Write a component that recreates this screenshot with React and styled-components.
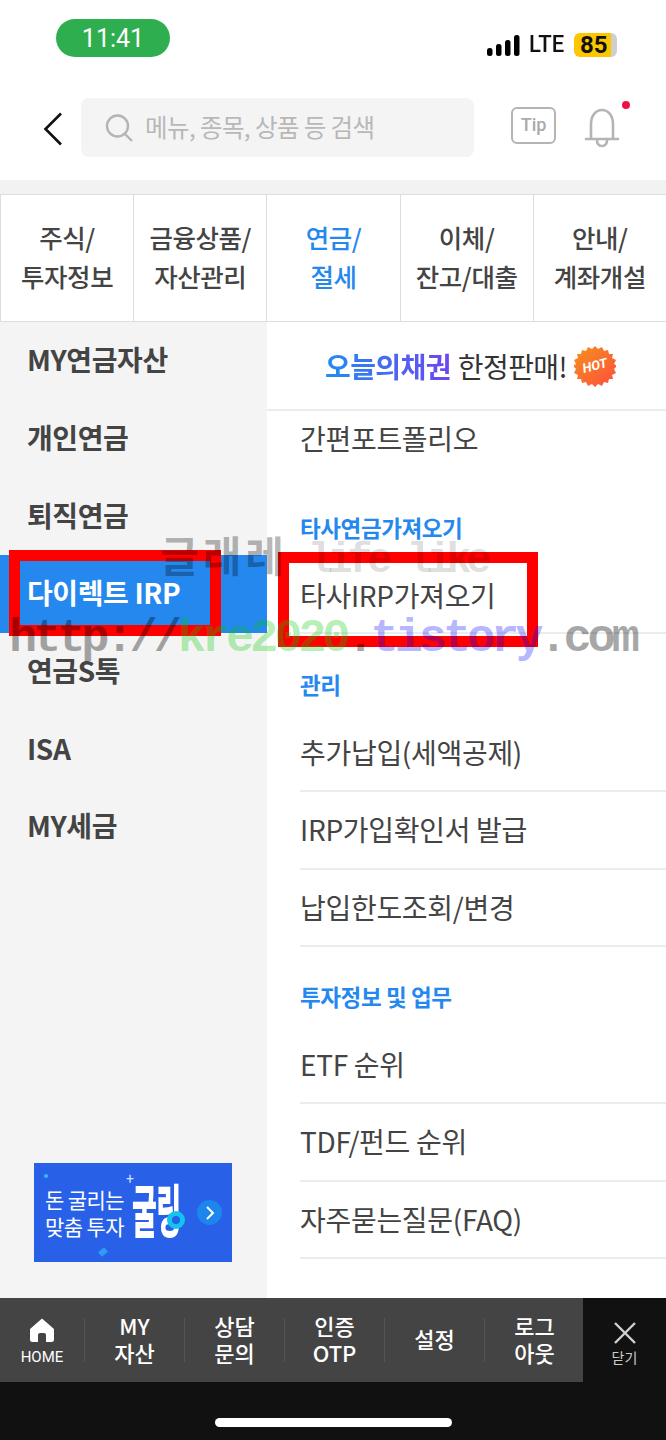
import React from 'react';
import styled, { createGlobalStyle } from 'styled-components';

const tabs = [
  ['주식/', '투자정보'],
  ['금융상품/', '자산관리'],
  ['연금/', '절세'],
  ['이체/', '잔고/대출'],
  ['안내/', '계좌개설'],
];

const sideMenu = ['MY연금자산', '개인연금', '퇴직연금', '다이렉트 IRP', '연금S톡', 'ISA', 'MY세금'];

const navItems = [['MY', '자산'], ['상담', '문의'], ['인증', 'OTP'], ['설정'], ['로그', '아웃']];

const App = () => (
  <Screen>
    <GlobalStyle />
    <StatusBar>
      <TimePill>11:41</TimePill>
      <StatusRight>
        <svg width="33" height="21" viewBox="0 0 33 21">
          <rect x="0" y="13" width="5.5" height="8" rx="2.5" fill="#000" />
          <rect x="9" y="9" width="5.5" height="12" rx="2.5" fill="#000" />
          <rect x="18" y="5" width="5.5" height="16" rx="2.5" fill="#000" />
          <rect x="27" y="0" width="5.5" height="21" rx="2.5" fill="#000" />
        </svg>
        <Lte>LTE</Lte>
        <Battery>85</Battery>
      </StatusRight>
    </StatusBar>

    <Header>
      <BackButton>
        <svg width="20" height="34" viewBox="0 0 20 34" fill="none">
          <path d="M18 1.5 2.5 17 18 32.5" stroke="#111" strokeWidth="2.6" />
        </svg>
      </BackButton>
      <SearchBox>
        <svg width="30" height="30" viewBox="0 0 30 30" fill="none" stroke="#b4b4b4" strokeWidth="2.4">
          <circle cx="13.5" cy="13" r="10.5" />
          <path d="m21 21 7 7" />
        </svg>
        <SearchText>메뉴, 종목, 상품 등 검색</SearchText>
      </SearchBox>
      <TipBadge>Tip</TipBadge>
      <BellWrap>
        <svg width="36" height="40" viewBox="0 0 36 40" fill="none" stroke="#b4b4b4" strokeWidth="2.6">
          <path d="M7 30V16C7 8 11.5 2 18 2s11 6 11 14v14" />
          <path d="M2 31h32" strokeLinecap="round" />
          <path d="M13 32c0 4 2 6 5 6s5-2 5-6" />
        </svg>
        <BellDot />
      </BellWrap>
    </Header>

    <GreyBand />

    <TabRow>
      {tabs.map((t, i) => (
        <Tab key={t[0]} $active={i === 2}>
          <span>{t[0]}</span>
          <span>{t[1]}</span>
        </Tab>
      ))}
    </TabRow>

    <Body>
      <Sidebar>
        <SideList>
          {sideMenu.map((m, i) => (
            <SideItem key={m} $active={i === 3}>{m}</SideItem>
          ))}
        </SideList>
        <Promo>
          <PromoDot />
          <PromoStar>+</PromoStar>
          <PromoText>
            <span>돈 굴리는</span>
            <span>맞춤 투자</span>
          </PromoText>
          <PromoLogo>굴링</PromoLogo>
          <PromoRing />
          <PromoArrow>
            <svg width="10" height="16" viewBox="0 0 10 16" fill="none">
              <path d="m2 2 6 6-6 6" stroke="#fff" strokeWidth="2" />
            </svg>
          </PromoArrow>
          <PromoChip />
        </Promo>
      </Sidebar>

      <Content>
        <AdRow>
          <AdBlue>오늘의채권</AdBlue>
          <AdDark>한정판매!</AdDark>
          <HotBadge>
            <svg width="42" height="42" viewBox="0 0 42 42">
              <defs>
                <linearGradient id="hot" x1="0" y1="0" x2="1" y2="1">
                  <stop offset="0" stopColor="#f5921e" />
                  <stop offset="1" stopColor="#ff4d3d" />
                </linearGradient>
              </defs>
              <path
                fill="url(#hot)"
                d="M21 1l3 3 4-2 2 4 4-1 1 4 4 0-1 4 4 2-2 4 3 2-3 3 2 4-4 2 1 4-4 0-1 4-4-1-2 4-4-2-3 3-3-3-4 2-2-4-4 1-1-4-4 0 1-4-4-2 2-4-3-3 3-2-2-4 4-2-1-4 4 0 1-4 4 1 2-4 4 2z"
              />
            </svg>
            <HotText>HOT</HotText>
          </HotBadge>
        </AdRow>
        <MenuItem $h={54}>간편포트폴리오</MenuItem>
        <SectionTitle $h={94} $pt={47}>타사연금가져오기</SectionTitle>
        <MenuItem $h={75} $line>타사IRP가져오기</MenuItem>
        <SectionTitle $h={80.5} $pt={35}>관리</SectionTitle>
        <MenuItem $h={77.500} $line>추가납입(세액공제)</MenuItem>
        <MenuItem $h={77.500} $line>IRP가입확인서 발급</MenuItem>
        <MenuItem $h={77.500} $line>납입한도조회/변경</MenuItem>
        <SectionTitle $h={79.5} $pt={33.5}>투자정보 및 업무</SectionTitle>
        <MenuItem $h={77.500} $line>ETF 순위</MenuItem>
        <MenuItem $h={77.500} $line>TDF/펀드 순위</MenuItem>
        <MenuItem $h={77.500} $line>자주묻는질문(FAQ)</MenuItem>
      </Content>
    </Body>

    <BottomNav>
      <NavMain>
        <HomeCell>
          <svg width="26" height="24" viewBox="0 0 26 24">
            <path
              fill="#fff"
              d="M13 0.5 25 11v10.5a2.5 2.5 0 0 1-2.5 2.5H17v-7a2 2 0 0 0-2-2h-4a2 2 0 0 0-2 2v7H3.500A2.500 2.500 0 0 1 1 21.500V11z"
            />
          </svg>
          <HomeLabel>HOME</HomeLabel>
        </HomeCell>
        {navItems.map(n => (
          <NavCell key={n[0]}>
            {n.map(l => (
              <span key={l}>{l}</span>
            ))}
          </NavCell>
        ))}
      </NavMain>
      <CloseCell>
        <svg width="24" height="24" viewBox="0 0 24 24" fill="none">
          <path d="M2 2l20 20M22 2 2 22" stroke="#d0d0d0" strokeWidth="2.4" />
        </svg>
        <CloseLabel>닫기</CloseLabel>
      </CloseCell>
    </BottomNav>

    <HomeBar>
      <HomeIndicator />
    </HomeBar>

    <RedBox $x={9} $y={550} $w={212} $h={86} />
    <RedBox $x={278} $y={552} $w={260} $h={95} />
    <MarkTop>
      <MarkHangul>글래레</MarkHangul> life like
    </MarkTop>
    <MarkUrl>
      <span>http://</span>
      <MarkGreen>kre2020</MarkGreen>
      <span>.</span>
      <MarkPurple>tistory</MarkPurple>
      <span>.com</span>
    </MarkUrl>
  </Screen>
);

export default App;

const GlobalStyle = createGlobalStyle`
  html, body {
    margin: 0;
    padding: 0;
    background: #fff;
  }
  * {
    box-sizing: border-box;
  }
`;

const Screen = styled.div`
  position: relative;
  width: 666px;
  height: 1440px;
  overflow: hidden;
  display: flex;
  flex-direction: column;
  background: #fff;
  font-family: 'Noto Sans CJK KR', 'Noto Sans', sans-serif;
`;

const StatusBar = styled.div`
  height: 85px;
  padding: 19px 49px 0 56px;
  display: flex;
  justify-content: space-between;
  align-items: flex-start;
`;

const TimePill = styled.div`
  width: 114px;
  height: 38px;
  padding-top: 1px;
  border-radius: 19px;
  background: #2fae50;
  color: #fff;
  font: 400 25px/38px 'Roboto', sans-serif;
  text-align: center;
`;

const StatusRight = styled.div`
  margin-top: 14px;
  display: flex;
  align-items: center;
  gap: 9px;
`;

const Lte = styled.span`
  width: 36px;
  color: #111;
  font: 500 23px/22px 'Roboto', sans-serif;
  transform: scaleX(0.96);
  transform-origin: left center;
`;

const Battery = styled.div`
  width: 43px;
  height: 24px;
  border-radius: 6px;
  padding-left: 6px;
  background: linear-gradient(90deg, #fdc700 0 86%, #cfcfcf 86% 100%);
  color: #111;
  font: 700 24px/24px 'Roboto', sans-serif;
`;

const Header = styled.div`
  height: 95px;
  padding: 13px 0 0 43px;
  display: flex;
  align-items: flex-start;
`;

const BackButton = styled.div`
  width: 38px;
  padding-top: 14px;
`;

const SearchBox = styled.div`
  width: 393px;
  height: 59px;
  padding-left: 23px;
  border-radius: 8px;
  background: #f4f4f4;
  display: flex;
  align-items: center;
  gap: 11px;
`;

const SearchText = styled.span`
  margin-top: -2px;
  color: #b8b8b8;
  font-size: 24.500px;
  letter-spacing: -0.6px;
`;

const TipBadge = styled.div`
  width: 45px;
  height: 37px;
  margin: 9px 0 0 37px;
  border: 2.4px solid #b4b4b4;
  border-radius: 6px;
  color: #aaa;
  font: 500 18px/31px 'Roboto', sans-serif;
  text-align: center;
`;

const BellWrap = styled.div`
  position: relative;
  margin: 10px 0 0 28px;
`;

const BellDot = styled.div`
  position: absolute;
  top: -7px;
  right: -10px;
  width: 8px;
  height: 8px;
  border-radius: 50%;
  background: #ee1144;
`;

const GreyBand = styled.div`
  height: 14px;
  background: #f2f2f2;
`;

const TabRow = styled.div`
  display: grid;
  grid-template-columns: repeat(5, 133.2px);
  height: 128px;
  border-top: 1.5px solid #dedede;
  border-bottom: 1.5px solid #dedede;
`;

const Tab = styled.div`
  display: flex;
  flex-direction: column;
  align-items: center;
  justify-content: center;
  padding-bottom: 4px;
  border-left: 1.5px solid #dedede;
  color: ${p => (p.$active ? '#2488ee' : '#444')};
  font-size: 25.500px;
  font-weight: 500;
  line-height: 39px;
  letter-spacing: -0.4px;
  white-space: nowrap;
`;

const Body = styled.div`
  height: 976px;
  display: flex;
`;

const Sidebar = styled.div`
  width: 267px;
  background: #f4f4f4;
  display: flex;
  flex-direction: column;
  justify-content: space-between;
  padding-bottom: 36px;
`;

const SideList = styled.div`
  display: flex;
  flex-direction: column;
`;

const SideItem = styled.div`
  height: 77.7px;
  padding: 0 0 3px 27px;
  display: flex;
  align-items: center;
  font-size: 28px;
  font-weight: 700;
  letter-spacing: -0.4px;
  color: ${p => (p.$active ? '#fff' : '#444')};
  background: ${p => (p.$active ? '#2488ee' : 'transparent')};
`;

const Promo = styled.div`
  position: relative;
  width: 198px;
  height: 99px;
  margin-left: 34px;
  padding-left: 11px;
  background: #2860e8;
  color: #fff;
  display: flex;
  align-items: center;
  gap: 7px;
`;

const PromoDot = styled.i`
  position: absolute;
  left: 10px;
  top: 11px;
  width: 4px;
  height: 4px;
  border-radius: 50%;
  background: #3bb8f5;
`;

const PromoStar = styled.i`
  position: absolute;
  left: 92px;
  top: 9px;
  font: 400 14px/14px 'Roboto', sans-serif;
  color: #cfe0ff;
`;

const PromoChip = styled.i`
  position: absolute;
  left: 65px;
  top: 86px;
  width: 8px;
  height: 6px;
  background: #2f9cf3;
  transform: rotate(-40deg);
`;

const PromoRing = styled.i`
  position: absolute;
  left: 133px;
  top: 48px;
  width: 18px;
  height: 18px;
  border-radius: 50%;
  border: 5px solid #13c4ee;
  background: #2860e8;
`;

const PromoText = styled.div`
  display: flex;
  flex-direction: column;
  font-size: 21px;
  line-height: 27px;
  white-space: nowrap;
  letter-spacing: -0.6px;
`;

const PromoLogo = styled.div`
  margin: -7px 0 0 1px;
  font-size: 27px;
  font-weight: 900;
  line-height: 30px;
  letter-spacing: -0.500px;
  white-space: nowrap;
  transform: scaleY(2.1);
`;

const PromoArrow = styled.div`
  position: absolute;
  right: 10px;
  top: 37px;
  width: 25px;
  height: 25px;
  border-radius: 50%;
  background: #1d86ee;
  display: flex;
  align-items: center;
  justify-content: center;
`;

const Content = styled.div`
  flex: 1;
  display: flex;
  flex-direction: column;
`;

const AdRow = styled.div`
  height: 89px;
  flex-shrink: 0;
  padding-left: 8px;
  border-bottom: 2px solid #ececec;
  display: flex;
  align-items: center;
  justify-content: center;
  font-size: 28px;
  letter-spacing: -0.6px;
  gap: 7px;
`;

const AdBlue = styled.span`
  font-weight: 700;
  background: linear-gradient(90deg, #1f8ef0, #6f45f0);
  -webkit-background-clip: text;
  background-clip: text;
  color: transparent;
`;

const AdDark = styled.span`
  color: #333;
  font-weight: 400;
`;

const HotBadge = styled.div`
  position: relative;
  width: 42px;
  height: 42px;
`;

const HotText = styled.span`
  position: absolute;
  inset: 0;
  color: #fff;
  font: italic 700 13px/42px 'Roboto', sans-serif;
  text-align: center;
  transform: rotate(-14deg);
  letter-spacing: 0;
`;

const MenuItem = styled.div`
  height: ${p => p.$h}px;
  flex-shrink: 0;
  margin-left: 33px;
  padding-bottom: 1px;
  display: flex;
  align-items: center;
  font-size: 28px;
  color: #444;
  letter-spacing: -0.3px;
  border-bottom: ${p => (p.$line ? '2px solid #ececec' : '0')};
`;

const SectionTitle = styled.div`
  height: ${p => p.$h}px;
  flex-shrink: 0;
  margin-left: 33px;
  padding-top: ${p => p.$pt}px;
  color: #2488ee;
  font-size: 22.500px;
  font-weight: 700;
  line-height: 30px;
  letter-spacing: -0.4px;
`;

const BottomNav = styled.div`
  height: 84px;
  display: flex;
  background: #111;
`;

const NavMain = styled.div`
  width: 583px;
  background: #444;
  display: grid;
  grid-template-columns: 84px repeat(5, 100px) 0;
  align-items: center;
`;

const HomeCell = styled.div`
  display: flex;
  flex-direction: column;
  align-items: center;
  color: #fff;
  padding-top: 4px;
`;

const HomeLabel = styled.span`
  margin-top: 6px;
  font: 400 15px/18px 'Roboto', sans-serif;
`;

const NavCell = styled.div`
  height: 44px;
  padding-bottom: 3px;
  display: flex;
  flex-direction: column;
  align-items: center;
  justify-content: center;
  border-left: 1px solid #555;
  color: #fff;
  font-size: 22px;
  font-weight: 500;
  line-height: 27px;

  span {
    display: block;
  }
`;

const CloseCell = styled.div`
  flex: 1;
  display: flex;
  flex-direction: column;
  align-items: center;
  padding-top: 23px;
  color: #ccc;
`;

const CloseLabel = styled.span`
  margin-top: 3px;
  font-size: 14px;
  line-height: 18px;
`;

const HomeBar = styled.div`
  flex: 1;
  background: #111;
  display: flex;
  justify-content: center;
  padding-top: 36px;
`;

const HomeIndicator = styled.div`
  width: 237px;
  height: 9px;
  border-radius: 5px;
  background: #fff;
`;

const RedBox = styled.div`
  position: absolute;
  left: ${p => p.$x}px;
  top: ${p => p.$y}px;
  width: ${p => p.$w}px;
  height: ${p => p.$h}px;
  border: 11px solid #f00;
`;

const MarkTop = styled.div`
  position: absolute;
  left: 160px;
  top: 533px;
  font: 700 42px/56px 'Liberation Mono', 'Noto Sans CJK KR', monospace;
  letter-spacing: -5.400px;
  white-space: nowrap;
  color: rgba(0, 0, 0, 0.14);
`;

const MarkHangul = styled.span`
  letter-spacing: 4px;
  color: rgba(0, 0, 0, 0.3);
`;

const MarkUrl = styled.div`
  position: absolute;
  left: 9px;
  top: 613px;
  font: 700 47px/52px 'Liberation Mono', monospace;
  letter-spacing: -4.1px;
  white-space: nowrap;
  color: rgba(0, 0, 0, 0.34);
`;

const MarkGreen = styled.span`
  color: rgba(0, 200, 0, 0.3);
`;

const MarkPurple = styled.span`
  color: rgba(0, 0, 255, 0.3);
`;
